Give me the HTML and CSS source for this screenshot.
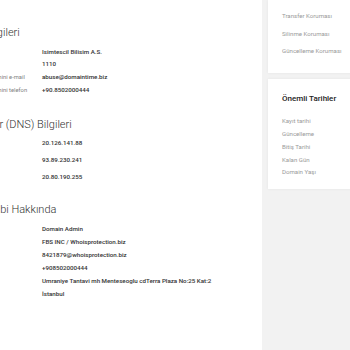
FILE: index.html
```html
<!DOCTYPE html>
<html lang="tr">
<head>
<meta charset="UTF-8">
<title>Whois Sorgu Sonucu</title>
<link rel="stylesheet" href="styles.css">
</head>
<body>
<div class="Page">
	<div class="Main">
		<h2 class="SectionTitle">Registrar Bilgileri</h2>
		<div class="InfoTable">
			<div class="InfoLabel">Firma</div><div class="InfoValue">Isimtescil Bilisim A.S.</div>
			<div class="InfoLabel">IANA ID</div><div class="InfoValue">1110</div>
			<div class="InfoLabel">Kötüye Kullanım Bildirimini e-mail</div><div class="InfoValue">abuse@domaintime.biz</div>
			<div class="InfoLabel">Kötüye Kullanım Bildirimini telefon</div><div class="InfoValue">+90.8502000444</div>
		</div>

		<h2 class="SectionTitle SectionTitle_Dns">Ad Sunucular (DNS) Bilgileri</h2>
		<div class="InfoTable InfoTable_Dns">
			<div class="InfoLabel">NS 1</div><div class="InfoValue">20.126.141.88</div>
			<div class="InfoLabel">NS 2</div><div class="InfoValue">93.89.230.241</div>
			<div class="InfoLabel">NS 3</div><div class="InfoValue">20.80.190.255</div>
		</div>

		<h2 class="SectionTitle SectionTitle_Owner">Domain Sahibi Hakkında</h2>
		<div class="InfoTable InfoTable_Owner">
			<div class="InfoLabel">Ad Soyad</div><div class="InfoValue">Domain Admin</div>
			<div class="InfoLabel">Firma</div><div class="InfoValue">FBS INC / Whoisprotection.biz</div>
			<div class="InfoLabel">E-posta</div><div class="InfoValue">8421879@whoisprotection.biz</div>
			<div class="InfoLabel">Telefon</div><div class="InfoValue">+908502000444</div>
			<div class="InfoLabel">Adres</div><div class="InfoValue">Umraniye Tantavi mh Menteseoglu cdTerra Plaza No:25 Kat:2</div>
			<div class="InfoLabel">Şehir</div><div class="InfoValue">İstanbul</div>
		</div>
	</div>

	<div class="Side">
		<div class="SideCard SideCard_Status">
			<ul class="SideList SideList_Status">
				<li>Transfer Koruması</li>
				<li>Silinme Koruması</li>
				<li>Güncelleme Koruması</li>
			</ul>
		</div>
		<div class="SideCard SideCard_Dates">
			<h3 class="SideTitle">Önemli Tarihler</h3>
			<ul class="SideList SideList_Dates">
				<li>Kayıt tarihi</li>
				<li>Güncelleme</li>
				<li>Bitiş Tarihi</li>
				<li>Kalan Gün</li>
				<li>Domain Yaşı</li>
			</ul>
		</div>
	</div>
</div>
</body>
</html>
```

FILE: styles.css
```css
body {
	margin: 0;
	overflow: hidden;
	background-color: #fff;
	font-family: Roboto, "Liberation Sans", sans-serif;
	color: #333;
}

.Page {
	display: flex;
	width: 520px;
	min-height: 100vh;
	margin-left: -75px;
}

.Main {
	width: 337px;
	flex: none;
	box-sizing: border-box;
	padding: 26px 0 0 14px;
}

.SectionTitle {
	margin: 0;
	font-size: 11px;
	line-height: 13px;
	font-weight: 300;
	color: #333;
	white-space: nowrap;
}

.SectionTitle_Dns {
	margin-top: 22px;
}

.SectionTitle_Owner {
	margin-top: 18px;
}

.InfoTable {
	display: grid;
	grid-template-columns: 103px 1fr;
	margin-top: 6.5px;
	font-size: 5.8px;
	line-height: 12.7px;
	white-space: nowrap;
}

.InfoTable_Dns {
	margin-top: 4px;
	line-height: 16.7px;
}

.InfoTable_Owner {
	line-height: 13px;
}

.InfoLabel {
	color: #808080;
}

.InfoValue {
	font-weight: 500;
	font-size: 6.2px;
	color: #333;
}

.Side {
	flex: 1;
	background-color: #f2f2f2;
	padding-left: 6px;
}

.SideCard {
	background-color: #fff;
	box-shadow: 0 0 3px rgba(0, 0, 0, .06);
	padding: 0 14px;
}

.SideCard_Status {
	padding-top: 7px;
	padding-bottom: 13px;
}

.SideCard_Dates {
	margin-top: 6.5px;
	padding-top: 15px;
	padding-bottom: 10px;
}

.SideTitle {
	margin: 0;
	font-size: 8px;
	line-height: 10px;
	font-weight: 500;
	color: #222;
}

.SideList {
	list-style: none;
	margin: 0;
	padding: 0;
	font-size: 6.1px;
	color: #9a9a9a;
	white-space: nowrap;
}

.SideList_Status {
	line-height: 17.65px;
}

.SideList_Dates {
	margin-top: 11px;
	line-height: 12.75px;
}
```
